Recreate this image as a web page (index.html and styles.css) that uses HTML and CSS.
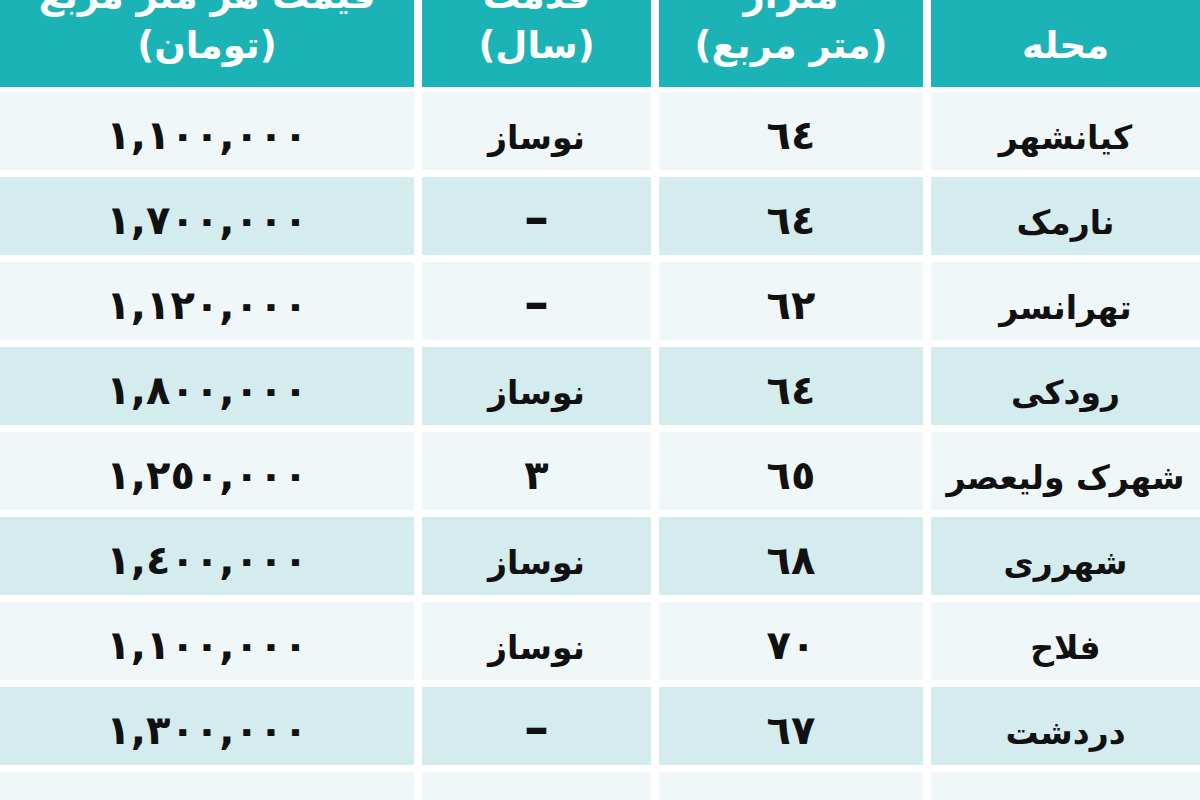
FILE: index.html
```html
<!DOCTYPE html>
<html lang="fa" dir="rtl">
<head>
<meta charset="utf-8">
<title>جدول اجاره</title>
<link rel="stylesheet" href="styles.css">
</head>
<body>
<div class="table">
  <div class="hcell"><span>محله</span></div>
  <div class="hcell"><span>متراژ<br>(متر مربع)</span></div>
  <div class="hcell"><span>قدمت<br>(سال)</span></div>
  <div class="hcell"><span>قیمت هر متر مربع<br>(تومان)</span></div>

  <div class="cell light">کیانشهر</div>
  <div class="cell light num">٦٤</div>
  <div class="cell light">نوساز</div>
  <div class="cell light num">١,١٠٠,٠٠٠</div>

  <div class="cell tint">نارمک</div>
  <div class="cell tint num">٦٤</div>
  <div class="cell tint dash">–</div>
  <div class="cell tint num">١,٧٠٠,٠٠٠</div>

  <div class="cell light">تهرانسر</div>
  <div class="cell light num">٦٢</div>
  <div class="cell light dash">–</div>
  <div class="cell light num">١,١٢٠,٠٠٠</div>

  <div class="cell tint">رودکی</div>
  <div class="cell tint num">٦٤</div>
  <div class="cell tint">نوساز</div>
  <div class="cell tint num">١,٨٠٠,٠٠٠</div>

  <div class="cell light">شهرک ولیعصر</div>
  <div class="cell light num">٦٥</div>
  <div class="cell light num">٣</div>
  <div class="cell light num">١,٢٥٠,٠٠٠</div>

  <div class="cell tint">شهرری</div>
  <div class="cell tint num">٦٨</div>
  <div class="cell tint">نوساز</div>
  <div class="cell tint num">١,٤٠٠,٠٠٠</div>

  <div class="cell light">فلاح</div>
  <div class="cell light num">٧٠</div>
  <div class="cell light">نوساز</div>
  <div class="cell light num">١,١٠٠,٠٠٠</div>

  <div class="cell tint">دردشت</div>
  <div class="cell tint num">٦٧</div>
  <div class="cell tint dash">–</div>
  <div class="cell tint num">١,٣٠٠,٠٠٠</div>

  <div class="cell light">پیروزی</div>
  <div class="cell light num">٦٦</div>
  <div class="cell light num">٢</div>
  <div class="cell light num">١,٥٠٠,٠٠٠</div>
</div>
</body>
</html>
```

FILE: styles.css
```css
html, body {
  margin: 0;
  padding: 0;
  background: #ffffff;
  overflow: hidden;
}

body {
  width: 1200px;
  height: 800px;
  font-family: "DejaVu Sans", "Noto Sans", sans-serif;
  font-weight: bold;
}

.table {
  display: grid;
  direction: rtl;
  grid-template-columns: 269px 264px 229px 1fr;
  grid-template-rows: 115px;
  grid-auto-rows: 78px;
  column-gap: 8px;
  row-gap: 7px;
  margin-top: -30px;
  width: 1200px;
}

.hcell {
  background: #1bb3b5;
  color: #ffffff;
  font-size: 37px;
  line-height: 50px;
  text-align: center;
  display: flex;
  align-items: flex-end;
  justify-content: center;
  padding-bottom: 16px;
  margin-bottom: -2px;
}

.cell {
  display: flex;
  align-items: center;
  justify-content: center;
  font-size: 33px;
  color: #111111;
  white-space: nowrap;
  padding-top: 12px;
  box-sizing: border-box;
}

.light {
  background: #eff7f8;
}

.tint {
  background: #d4ecee;
}

.num {
  font-size: 40px;
  letter-spacing: 1px;
  padding-top: 8px;
}

.dash {
  font-size: 50px;
  padding-top: 4px;
}
```
